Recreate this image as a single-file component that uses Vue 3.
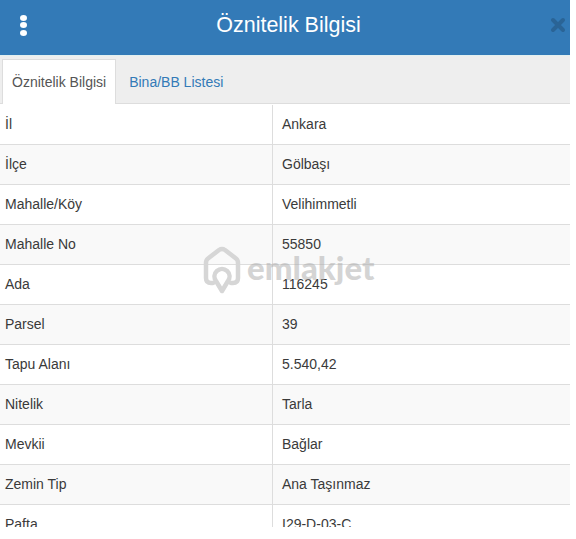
<script setup>
const rows = [
  ['İl', 'Ankara'],
  ['İlçe', 'Gölbaşı'],
  ['Mahalle/Köy', 'Velihimmetli'],
  ['Mahalle No', '55850'],
  ['Ada', '116245'],
  ['Parsel', '39'],
  ['Tapu Alanı', '5.540,42'],
  ['Nitelik', 'Tarla'],
  ['Mevkii', 'Bağlar'],
  ['Zemin Tip', 'Ana Taşınmaz'],
  ['Pafta', 'I29-D-03-C']
]
</script>

<template>
  <div class="panel">
    <header class="head">
      <div class="dots"><i></i><i></i><i></i></div>
      <h1>Öznitelik Bilgisi</h1>
      <svg class="close" viewBox="0 0 16 16" width="16" height="16">
        <path d="M3 3 L13 13 M13 3 L3 13" stroke="#2a6496" stroke-width="4" stroke-linecap="round" />
      </svg>
    </header>
    <nav class="tabs">
      <span class="tab active">Öznitelik Bilgisi</span>
      <span class="tab">Bina/BB Listesi</span>
    </nav>
    <div class="table">
      <div v-for="(r, i) in rows" :key="r[0]" class="row" :class="{ odd: i % 2 === 1 }">
        <div class="cell key">{{ r[0] }}</div>
        <div class="cell">{{ r[1] }}</div>
      </div>
    </div>
    <div class="mark">
      <svg viewBox="0 0 38 48" width="38" height="48" fill="none" stroke="#d6d6d6" stroke-width="4.5" stroke-linejoin="round" stroke-linecap="round">
        <path d="M10 37 H8 Q3 37 3 32 V17 Q3 14 5 12.5 L16 4 Q19 2 22 4 L33 12.5 Q35 14 35 17 V32 Q35 37 30 37 H28" />
        <path d="M19 45 L13 35 A7.5 7.5 0 1 1 25 35 Z" />
      </svg>
      <span>emlakjet</span>
    </div>
  </div>
</template>

<style scoped>
.panel {
  position: relative;
  width: 570px;
  height: 527px;
  overflow: hidden;
  font-family: "Liberation Sans", Arial, sans-serif;
  font-size: 14px;
  color: #3a3a3a;
  background: #fff;
}
.head {
  height: 55px;
  background: #337ab7;
  display: flex;
  align-items: center;
  justify-content: space-between;
  padding: 0 4px 5px 20px;
  box-sizing: border-box;
}
.head h1 {
  margin: 0;
  font-size: 21.5px;
  font-weight: 400;
  color: #fff;
  line-height: 50px;
}
.dots {
  display: flex;
  flex-direction: column;
  gap: 1.5px;
}
.dots i {
  width: 7px;
  height: 6px;
  border-radius: 50%;
  background: #fff;
}
.tabs {
  height: 49px;
  box-sizing: border-box;
  background: #eee;
  border-top: 1px solid #e2f0f0;
  border-bottom: 1px solid #ddd;
  display: flex;
  align-items: flex-end;
  padding-left: 2px;
}
.tab {
  height: 44px;
  line-height: 44px;
  padding: 0 10px;
  margin-bottom: -1px;
  color: #337ab7;
  margin-left: 3px;
}
.tab.active {
  margin-left: 0;
  background: #fff;
  color: #555;
  border: 1px solid #ddd;
  border-bottom: 0;
  padding: 0 9px;
}
.table {
  margin-top: 1px;
}
.row {
  display: grid;
  grid-template-columns: 273px 1fr;
  height: 40px;
  box-sizing: border-box;
  border-bottom: 1px solid #ddd;
}
.row.odd {
  background: #f9f9f9;
}
.cell {
  line-height: 39px;
  padding-left: 9px;
}
.key {
  padding-left: 5px;
  border-right: 1px solid #ddd;
}
.mark {
  position: absolute;
  left: 203px;
  top: 246px;
  display: flex;
  align-items: flex-start;
  gap: 6px;
  pointer-events: none;
}
.mark span {
  font-family: Lato, sans-serif;
  font-weight: 900;
  font-size: 33px;
  line-height: 42px;
  color: rgba(170, 170, 170, 0.5);
}
</style>
